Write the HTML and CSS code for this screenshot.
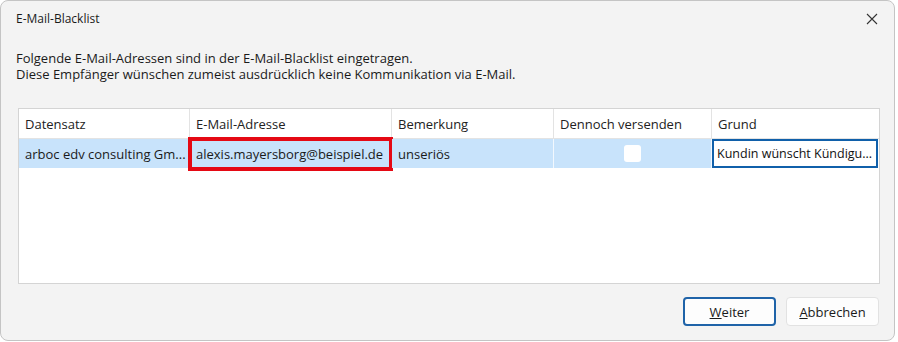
FILE: index.html
```html
<!DOCTYPE html>
<html lang="de">
<head>
  <meta charset="UTF-8">
  <title>E-Mail-Blacklist</title>
  <link rel="stylesheet" href="styles.css">
</head>
<body>
  <div class="dialog">
    <div class="titlebar">
      <span class="title">E-Mail-Blacklist</span>
      <svg class="close" width="12" height="12" viewBox="0 0 12 12">
        <path d="M1 1 L11 11 M11 1 L1 11" stroke="#333" stroke-width="1.1" fill="none"/>
      </svg>
    </div>

    <div class="intro">
      <div>Folgende E-Mail-Adressen sind in der E-Mail-Blacklist eingetragen.</div>
      <div>Diese Empfänger wünschen zumeist ausdrücklich keine Kommunikation via E-Mail.</div>
    </div>

    <div class="grid">
      <div class="row head">
        <div class="cell">Datensatz</div>
        <div class="cell">E-Mail-Adresse</div>
        <div class="cell">Bemerkung</div>
        <div class="cell">Dennoch versenden</div>
        <div class="cell">Grund</div>
      </div>
      <div class="row selected">
        <div class="cell">arboc edv consulting Gm...</div>
        <div class="cell marked">alexis.mayersborg@beispiel.de<span class="mark"></span></div>
        <div class="cell">unseriös</div>
        <div class="cell center"><span class="check"></span></div>
        <div class="cell editor">Kundin wünscht Kündigu...</div>
      </div>
    </div>

    <div class="footer">
      <button class="btn default"><u>W</u>eiter</button>
      <button class="btn"><u>A</u>bbrechen</button>
    </div>
  </div>
</body>
</html>
```

FILE: styles.css
```css
body {
  margin: 0;
  background: #ffffff;
  font-family: "Open Sans", "Noto Sans", sans-serif;
  font-size: 13px;
  color: #1a1a1a;
}
.dialog {
  width: 895px;
  height: 341px;
  box-sizing: border-box;
  border: 1px solid #c4c4c4;
  border-radius: 8px;
  background: #f3f3f3;
  display: flex;
  flex-direction: column;
}
.titlebar {
  height: 35px;
  display: flex;
  align-items: center;
  justify-content: space-between;
  padding: 0 15px 0 15px;
}
.title {
  font-size: 12px;
}
.close {
  margin-right: 1px;
}
.intro {
  margin-top: 14px;
  padding-left: 15px;
  line-height: 16px;
}
.grid {
  margin: 26px 0 0 17px;
  width: 862px;
  height: 176px;
  box-sizing: border-box;
  border: 1px solid #d4d4d4;
  background: #ffffff;
}
.row {
  display: grid;
  grid-template-columns: 171px 202px 162px 158px 167px;
  height: 29px;
}
.head {
  height: 30px;
}
.head .cell {
  border-right: 1px solid #e3e3e3;
  border-bottom: 1px solid #e3e3e3;
  color: #222;
}
.head .cell:last-child {
  border-right: none;
}
.cell {
  box-sizing: border-box;
  display: flex;
  align-items: center;
  padding-left: 6px;
  white-space: nowrap;
  overflow: hidden;
  position: relative;
}
.selected .cell {
  background: #c8e3fb;
  border-right: 1px solid #f2f8fe;
}
.marked {
  overflow: visible;
}
.mark {
  position: absolute;
  left: -2px;
  right: -2px;
  top: -2px;
  bottom: -3px;
  border: 4px solid #e50914;
  box-sizing: border-box;
}
.center {
  justify-content: center;
  padding-left: 0;
}
.check {
  width: 17px;
  height: 17px;
  background: #ffffff;
  border-radius: 3px;
}
.selected .cell.editor {
  background: #ffffff;
  border: 2px solid #1060aa;
  margin-right: 1px;
  padding-left: 3px;
  font-size: 12.5px;
  color: #111;
}
.footer {
  display: flex;
  justify-content: flex-end;
  gap: 10px;
  margin-top: 13px;
  padding-right: 15px;
}
.btn {
  font-family: inherit;
  font-size: 13px;
  color: #1a1a1a;
  width: 93px;
  height: 29px;
  background: #fdfdfd;
  border: 1px solid #e2e2e2;
  border-radius: 4px;
}
.btn.default {
  border: 2px solid #1f63a8;
}
```
